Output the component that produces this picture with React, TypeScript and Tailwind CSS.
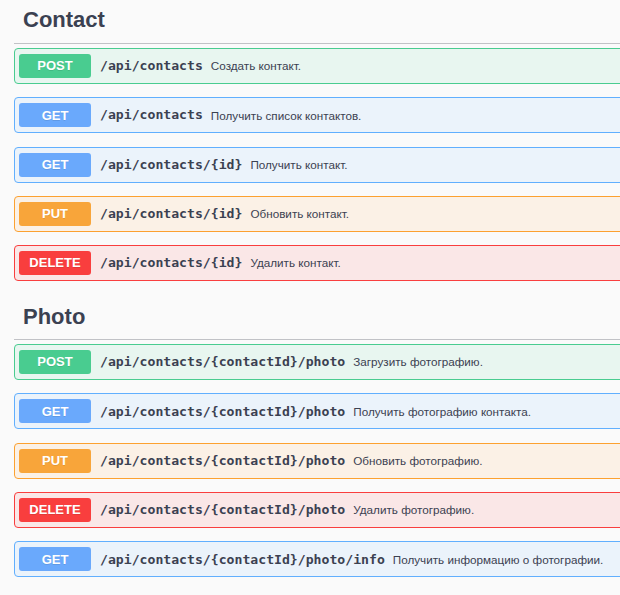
import React from 'react';

type Method = 'POST' | 'GET' | 'PUT' | 'DELETE';

interface Endpoint {
  method: Method;
  path: string;
  summary: string;
}

interface Tag {
  name: string;
  endpoints: Endpoint[];
}

const styles: Record<Method, { row: string; badge: string }> = {
  POST: { row: 'bg-[#e8f6f0] border-[#49cc90]', badge: 'bg-[#49cc90]' },
  GET: { row: 'bg-[#ebf3fb] border-[#61affe]', badge: 'bg-[#6aa9fc]' },
  PUT: { row: 'bg-[#fbf1e6] border-[#fca130]', badge: 'bg-[#f8a53a]' },
  DELETE: { row: 'bg-[#fae7e7] border-[#f93e3e]', badge: 'bg-[#f93e3e]' },
};

const tags: Tag[] = [
  {
    name: 'Contact',
    endpoints: [
      { method: 'POST', path: '/api/contacts', summary: 'Создать контакт.' },
      { method: 'GET', path: '/api/contacts', summary: 'Получить список контактов.' },
      { method: 'GET', path: '/api/contacts/{id}', summary: 'Получить контакт.' },
      { method: 'PUT', path: '/api/contacts/{id}', summary: 'Обновить контакт.' },
      { method: 'DELETE', path: '/api/contacts/{id}', summary: 'Удалить контакт.' },
    ],
  },
  {
    name: 'Photo',
    endpoints: [
      { method: 'POST', path: '/api/contacts/{contactId}/photo', summary: 'Загрузить фотографию.' },
      { method: 'GET', path: '/api/contacts/{contactId}/photo', summary: 'Получить фотографию контакта.' },
      { method: 'PUT', path: '/api/contacts/{contactId}/photo', summary: 'Обновить фотографию.' },
      { method: 'DELETE', path: '/api/contacts/{contactId}/photo', summary: 'Удалить фотографию.' },
      { method: 'GET', path: '/api/contacts/{contactId}/photo/info', summary: 'Получить информацию о фотографии.' },
    ],
  },
];

function OpBlock({ op }: { op: Endpoint }) {
  const s = styles[op.method];
  return (
    <div className={`flex items-center h-[36px] border rounded-[4px] pl-[4px] ${s.row}`}>
      <span
        className={`w-[72px] h-[24px] rounded-[3px] flex items-center justify-center text-white font-bold text-[13px] [text-shadow:0_1px_0_rgba(0,0,0,0.1)] ${s.badge}`}
        style={{ fontFamily: '"Liberation Sans", Arial, sans-serif' }}
      >
        {op.method}
      </span>
      <span
        className="pl-[9px] pr-[8px] text-[13.15px] font-bold text-[#3b4151] whitespace-nowrap"
        style={{ fontFamily: '"DejaVu Sans Mono", monospace' }}
      >
        {op.path}
      </span>
      <span
        className="text-[11.7px] text-[#3b4151] whitespace-nowrap"
        style={{ fontFamily: '"Liberation Sans", Arial, sans-serif' }}
      >
        {op.summary}
      </span>
    </div>
  );
}

export default function App() {
  return (
    <div className="w-[620px] h-[595px] overflow-hidden bg-[#fafafa]">
      <div className="pl-[14px] w-[680px]">
        {tags.map((tag, i) => (
          <section key={tag.name} className={i > 0 ? 'mt-[13px]' : ''}>
            {/* Tag header */}
            <h3
              className={`pl-[9px] text-[22px] leading-[28px] font-bold text-[#3b4151] border-b border-[#c1c2c6] ${
                i > 0 ? 'pt-[9px] pb-[8px]' : 'pt-[6px] pb-[9px]'
              }`}
              style={{ fontFamily: '"Liberation Sans", Arial, sans-serif' }}
            >
              {tag.name}
            </h3>
            <div className="mt-[4px] flex flex-col gap-[13.3px]">
              {tag.endpoints.map((op, j) => (
                <OpBlock key={j} op={op} />
              ))}
            </div>
          </section>
        ))}
      </div>
    </div>
  );
}
